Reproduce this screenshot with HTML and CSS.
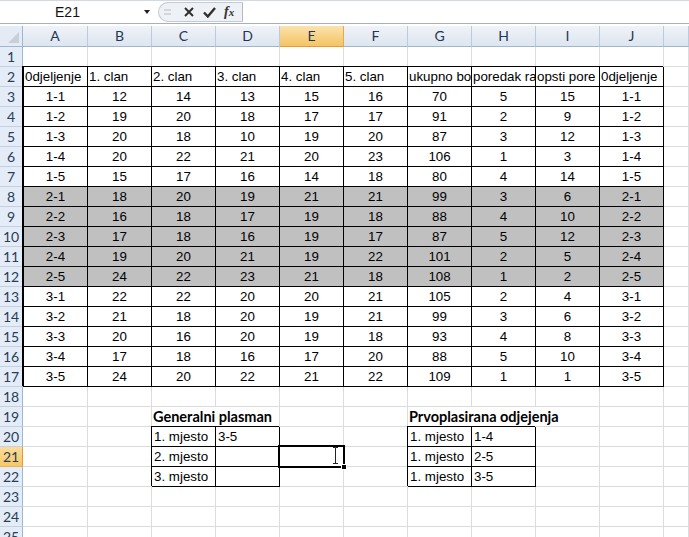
FILE: index.html
```html
<!DOCTYPE html>
<html lang="hr">
<head>
    <meta charset="UTF-8">
    <title>Plasman odjeljenja</title>
    <link rel="stylesheet" href="styles.css">
</head>
<body>
    <div class="formula-bar">
        <div class="name-box"><span class="name">E21</span><span class="drop"></span></div>
        <div class="fx-group">
            <span class="grip"></span>
            <svg class="btn-x" width="10" height="10" viewBox="0 0 10 10"><path d="M1 1L9 9M9 1L1 9" stroke="#2f2f2f" stroke-width="2"/></svg>
            <svg class="btn-ok" width="13" height="11" viewBox="0 0 13 11"><path d="M1 5.5L4.8 9.5L12 1" stroke="#2f2f2f" stroke-width="2.4" fill="none"/></svg>
            <span class="fx"><i>f</i><i class="sub">x</i></span>
        </div>
        <div class="formula-input"></div>
    </div>

    <div class="sheet">
        <div class="row head">
            <div class="corner"></div>
            <div>A</div><div>B</div><div>C</div><div>D</div><div class="sel">E</div>
            <div>F</div><div>G</div><div>H</div><div>I</div><div>J</div><div></div>
        </div>

        <div class="row"><div class="rh">1</div><div></div><div></div><div></div><div></div><div></div><div></div><div></div><div></div><div></div><div></div><div></div></div>

        <div class="row data labels"><div class="rh">2</div><div>0djeljenje</div><div>1. clan</div><div>2. clan</div><div>3. clan</div><div>4. clan</div><div>5. clan</div><div>ukupno bo</div><div>poredak ra</div><div>opsti pore</div><div>0djeljenje</div><div></div></div>

        <div class="row data"><div class="rh">3</div><div>1-1</div><div>12</div><div>14</div><div>13</div><div>15</div><div>16</div><div>70</div><div>5</div><div>15</div><div>1-1</div><div></div></div>
        <div class="row data"><div class="rh">4</div><div>1-2</div><div>19</div><div>20</div><div>18</div><div>17</div><div>17</div><div>91</div><div>2</div><div>9</div><div>1-2</div><div></div></div>
        <div class="row data"><div class="rh">5</div><div>1-3</div><div>20</div><div>18</div><div>10</div><div>19</div><div>20</div><div>87</div><div>3</div><div>12</div><div>1-3</div><div></div></div>
        <div class="row data"><div class="rh">6</div><div>1-4</div><div>20</div><div>22</div><div>21</div><div>20</div><div>23</div><div>106</div><div>1</div><div>3</div><div>1-4</div><div></div></div>
        <div class="row data"><div class="rh">7</div><div>1-5</div><div>15</div><div>17</div><div>16</div><div>14</div><div>18</div><div>80</div><div>4</div><div>14</div><div>1-5</div><div></div></div>
        <div class="row data fill"><div class="rh">8</div><div>2-1</div><div>18</div><div>20</div><div>19</div><div>21</div><div>21</div><div>99</div><div>3</div><div>6</div><div>2-1</div><div></div></div>
        <div class="row data fill"><div class="rh">9</div><div>2-2</div><div>16</div><div>18</div><div>17</div><div>19</div><div>18</div><div>88</div><div>4</div><div>10</div><div>2-2</div><div></div></div>
        <div class="row data fill"><div class="rh">10</div><div>2-3</div><div>17</div><div>18</div><div>16</div><div>19</div><div>17</div><div>87</div><div>5</div><div>12</div><div>2-3</div><div></div></div>
        <div class="row data fill"><div class="rh">11</div><div>2-4</div><div>19</div><div>20</div><div>21</div><div>19</div><div>22</div><div>101</div><div>2</div><div>5</div><div>2-4</div><div></div></div>
        <div class="row data fill"><div class="rh">12</div><div>2-5</div><div>24</div><div>22</div><div>23</div><div>21</div><div>18</div><div>108</div><div>1</div><div>2</div><div>2-5</div><div></div></div>
        <div class="row data"><div class="rh">13</div><div>3-1</div><div>22</div><div>22</div><div>20</div><div>20</div><div>21</div><div>105</div><div>2</div><div>4</div><div>3-1</div><div></div></div>
        <div class="row data"><div class="rh">14</div><div>3-2</div><div>21</div><div>18</div><div>20</div><div>19</div><div>21</div><div>99</div><div>3</div><div>6</div><div>3-2</div><div></div></div>
        <div class="row data"><div class="rh">15</div><div>3-3</div><div>20</div><div>16</div><div>20</div><div>19</div><div>18</div><div>93</div><div>4</div><div>8</div><div>3-3</div><div></div></div>
        <div class="row data"><div class="rh">16</div><div>3-4</div><div>17</div><div>18</div><div>16</div><div>17</div><div>20</div><div>88</div><div>5</div><div>10</div><div>3-4</div><div></div></div>
        <div class="row data"><div class="rh">17</div><div>3-5</div><div>24</div><div>20</div><div>22</div><div>21</div><div>22</div><div>109</div><div>1</div><div>1</div><div>3-5</div><div></div></div>

        <div class="row"><div class="rh">18</div><div></div><div></div><div></div><div></div><div></div><div></div><div></div><div></div><div></div><div></div><div></div></div>

        <div class="row"><div class="rh">19</div><div></div><div></div><div class="title span2">Generalni plasman</div><div></div><div></div><div class="title span3">Prvoplasirana odjejenja</div><div></div><div></div></div>

        <div class="row"><div class="rh">20</div><div></div><div></div><div class="b">1. mjesto</div><div class="b">3-5</div><div></div><div></div><div class="b">1. mjesto</div><div class="b">1-4</div><div></div><div></div><div></div></div>
        <div class="row"><div class="rh sel">21</div><div></div><div></div><div class="b">2. mjesto</div><div class="b"></div>
            <div class="active">
                <div class="selection">
                    <svg class="ibeam" width="7" height="17" viewBox="0 0 7 17"><path d="M1 0.5H3.5M3.5 0.5H6M3.5 0.5V16.5M1 16.5H6" stroke="#222" stroke-width="1" fill="none"/></svg>
                    <span class="handle"></span>
                </div>
            </div>
            <div></div><div class="b">1. mjesto</div><div class="b">2-5</div><div></div><div></div><div></div></div>
        <div class="row"><div class="rh">22</div><div></div><div></div><div class="b">3. mjesto</div><div class="b"></div><div></div><div></div><div class="b">1. mjesto</div><div class="b">3-5</div><div></div><div></div><div></div></div>

        <div class="row"><div class="rh">23</div><div></div><div></div><div></div><div></div><div></div><div></div><div></div><div></div><div></div><div></div><div></div></div>
        <div class="row"><div class="rh">24</div><div></div><div></div><div></div><div></div><div></div><div></div><div></div><div></div><div></div><div></div><div></div></div>
        <div class="row"><div class="rh">25</div><div></div><div></div><div></div><div></div><div></div><div></div><div></div><div></div><div></div><div></div><div></div></div>
    </div>
</body>
</html>
```

FILE: styles.css
```css
* {
    margin: 0;
    padding: 0;
    box-sizing: border-box;
}

body {
    font-family: "Liberation Sans", Arial, sans-serif;
    font-size: 13.33px;
    color: #000;
    background-color: #fff;
    width: 689px;
    height: 537px;
    overflow: hidden;
}

/* formula bar */
.formula-bar {
    display: flex;
    height: 24px;
    border-top: 1px solid #d3d9e0;
    border-bottom: 1px solid #a7b0bb;
    margin-bottom: 2px;
}

.name-box {
    width: 155px;
    display: flex;
    align-items: center;
}

.name {
    width: 135px;
    text-align: center;
    font-size: 14px;
    color: #111;
}

.drop {
    margin-left: 9px;
    width: 0;
    height: 0;
    border-left: 3.5px solid transparent;
    border-right: 3.5px solid transparent;
    border-top: 4px solid #222;
}

.fx-group {
    margin-left: 3px;
    margin-top: 1px;
    width: 85px;
    height: 20px;
    display: flex;
    align-items: center;
    background-color: #eef1f5;
    border: 1px solid #c4cad2;
    border-right-color: #b3bbc5;
    border-radius: 10px 0 0 10px;
}

.grip {
    margin-left: 5px;
    width: 7px;
    height: 6px;
    border-top: 2px solid #d3d7dc;
    border-bottom: 2px solid #d3d7dc;
}

.btn-x {
    margin-left: 13px;
}

.btn-ok {
    margin-left: 9px;
}

.fx {
    margin-left: 8px;
    font-family: "Liberation Serif", "Times New Roman", serif;
    font-size: 14px;
    font-weight: bold;
    color: #333;
}

.fx .sub {
    font-size: 11px;
}

.formula-input {
    flex: 1;
    background-color: #fff;
}

/* sheet grid */
.row {
    display: grid;
    grid-template-columns: 23px 65px repeat(9, 64px) 1fr;
    height: 20px;
}

.row > div {
    border-right: 1px solid #dadcdd;
    border-bottom: 1px solid #dadcdd;
    padding: 0 2px;
    line-height: 19px;
    white-space: nowrap;
    overflow: hidden;
}

.row.head {
    height: 21px;
}

.head > div {
    background: linear-gradient(#f0f3f8, #dde5ef);
    border-right: 1px solid #bccadb;
    border-bottom: 1px solid #9eb6ce;
    font-family: Lato, "Open Sans", sans-serif;
    font-size: 14px;
    line-height: 20px;
    text-align: center;
    color: #1f3756;
}

.head > .sel {
    background: linear-gradient(#fbe2ae, #f3c462);
    border-right-color: #e8a84c;
    border-bottom-color: #f29436;
}

.head > .corner {
    position: relative;
    background: #e4ebf4;
    border-right-color: #9eb6ce;
}

.corner::after {
    content: "";
    position: absolute;
    right: 3px;
    bottom: 3px;
    width: 0;
    height: 0;
    border-left: 11px solid transparent;
    border-bottom: 11px solid #c6cfda;
}

.row > .rh {
    background-color: #e4ecf7;
    border-right: 1px solid #9eb6ce;
    border-bottom: 1px solid #c3d0df;
    font-family: Lato, "Open Sans", sans-serif;
    font-size: 14px;
    text-align: center;
    padding: 0;
    color: #2a3d57;
}

.row > .rh.sel {
    background: linear-gradient(#fbdc9c, #f6c866);
    border-right-color: #f29436;
    border-bottom-color: #e8b35a;
}

/* bordered data table */
.data > div:nth-child(n+2):nth-child(-n+11),
.row > .b {
    border-color: #000;
    box-shadow: -1px -1px 0 #000;
}

.data > div:nth-child(n+2):nth-child(-n+11) {
    text-align: center;
}

.data > div:nth-child(2) {
    border-left: 1px solid #000;
    box-shadow: 0 -1px 0 #000;
}

.data.labels > div:nth-child(n+2):nth-child(-n+11) {
    text-align: left;
    padding: 0 1px;
}

.fill > div:nth-child(n+2):nth-child(-n+11) {
    background-color: #c0c0c0;
}

.row > .title {
    font-family: Lato, "Open Sans", sans-serif;
    font-weight: bold;
    font-size: 14.5px;
    padding: 0 1px;
}

.span2 {
    grid-column: span 2;
}

.span3 {
    grid-column: span 3;
}

/* active cell */
.row > .active {
    position: relative;
    overflow: visible;
}

.selection {
    position: absolute;
    top: -2px;
    left: -2px;
    right: -2px;
    bottom: -2px;
    border: 2px solid #000;
    z-index: 2;
}

.ibeam {
    position: absolute;
    right: 4px;
    top: 0;
}

.handle {
    position: absolute;
    right: -4px;
    bottom: -4px;
    width: 6px;
    height: 6px;
    background-color: #000;
    border: 1px solid #fff;
}
```
